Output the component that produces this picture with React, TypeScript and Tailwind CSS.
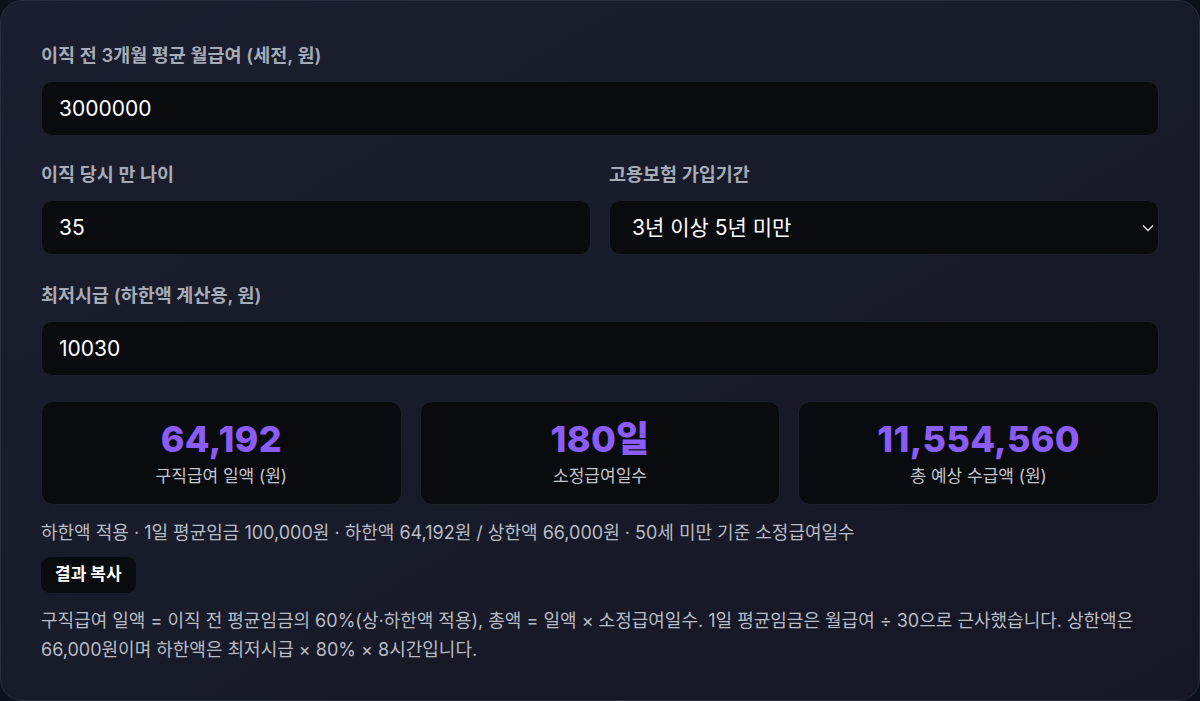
import React, { useState } from "react";

const font = {
  fontFamily: '"Inter", "Noto Sans CJK KR", "Noto Sans", sans-serif',
};

const periods = [
  "1년 미만",
  "1년 이상 3년 미만",
  "3년 이상 5년 미만",
  "5년 이상 10년 미만",
  "10년 이상",
];

const fmt = (n: number) => n.toLocaleString("en-US");

const Label = ({ children }: { children: React.ReactNode }) => (
  <div className="h-6 mb-[14px] text-[18.5px] leading-6 font-semibold text-[#a6abb8]">
    {children}
  </div>
);

const inputCls =
  "w-full h-[55px] rounded-[11px] bg-[#0a0b0f] border border-[#1d202b] px-[17px] text-[21px] text-white outline-none";

const Stat = ({ value, label }: { value: string; label: string }) => (
  <div className="flex-1 h-[104px] rounded-[12px] bg-[#0a0b0f] border border-[#1d202b] flex flex-col items-center justify-center">
    <div className="text-[36px] leading-10 font-extrabold text-[#8b5cf6] tracking-[0.3px]">
      {value}
    </div>
    <div className="mt-[5px] text-[17px] leading-6 text-[#c3c6ce]">{label}</div>
  </div>
);

export default function App() {
  const [salary, setSalary] = useState("3000000");
  const [age, setAge] = useState("35");
  const [period, setPeriod] = useState(periods[2]);
  const [minWage, setMinWage] = useState("10030");

  const daily = Math.round(Number(salary) / 30);
  const lower = Math.round(Number(minWage) * 0.8 * 8);
  const upper = 66000;
  const benefit = Math.min(Math.max(daily * 0.6, lower), upper);
  const days = 180;

  return (
    <div className="w-[1200px] h-[701px] bg-[#0c0f1c]" style={font}>
      <div className="w-full h-full rounded-[22px] border border-[#2a2e3f] bg-gradient-to-br from-[#1b1e2e] via-[#181b29] to-[#161625] px-10 pt-[42px]">
        <Label>이직 전 3개월 평균 월급여 (세전, 원)</Label>
        <input
          className={inputCls}
          value={salary}
          onChange={(e) => setSalary(e.target.value)}
        />

        <div className="mt-[26px] grid grid-cols-2 gap-[18px]">
          <div>
            <Label>이직 당시 만 나이</Label>
            <input
              className={inputCls}
              value={age}
              onChange={(e) => setAge(e.target.value)}
            />
          </div>
          <div>
            <Label>고용보험 가입기간</Label>
            <div className="relative">
              <select
                className={inputCls + " appearance-none pl-[22px]"}
                value={period}
                onChange={(e) => setPeriod(e.target.value)}
              >
                {periods.map((p) => (
                  <option key={p}>{p}</option>
                ))}
              </select>
              <svg
                className="absolute right-[4px] top-[23px] pointer-events-none"
                width="14"
                height="10"
                viewBox="0 0 14 10"
                fill="none"
              >
                <path d="M2 2.5l5 5 5-5" stroke="#e5e7eb" strokeWidth="1.3" />
              </svg>
            </div>
          </div>
        </div>

        <div className="mt-[28px]">
          <Label>최저시급 (하한액 계산용, 원)</Label>
          <input
            className={inputCls}
            value={minWage}
            onChange={(e) => setMinWage(e.target.value)}
          />
        </div>

        <div className="mt-[25px] flex gap-[18px]">
          <Stat value={fmt(benefit)} label="구직급여 일액 (원)" />
          <Stat value={`${days}일`} label="소정급여일수" />
          <Stat value={fmt(benefit * days)} label="총 예상 수급액 (원)" />
        </div>

        <p className="mt-[16px] text-[18px] leading-6 text-[#b8bcc6]">
          하한액 적용 · 1일 평균임금 {fmt(daily)}원 · 하한액 {fmt(lower)}원 /
          상한액 {fmt(upper)}원 · 50세 미만 기준 소정급여일수
        </p>

        <button className="mt-[12px] h-9 px-[14px] rounded-[9px] bg-[#0a0b0f] text-[17px] font-bold text-white">
          결과 복사
        </button>

        <p className="mt-[13px] text-[18px] leading-[29px] text-[#b8bcc6]">
          구직급여 일액 = 이직 전 평균임금의 60%(상·하한액 적용), 총액 = 일액 ×
          소정급여일수. 1일 평균임금은 월급여 ÷ 30으로 근사했습니다. 상한액은
          66,000원이며 하한액은 최저시급 × 80% × 8시간입니다.
        </p>
      </div>
    </div>
  );
}
